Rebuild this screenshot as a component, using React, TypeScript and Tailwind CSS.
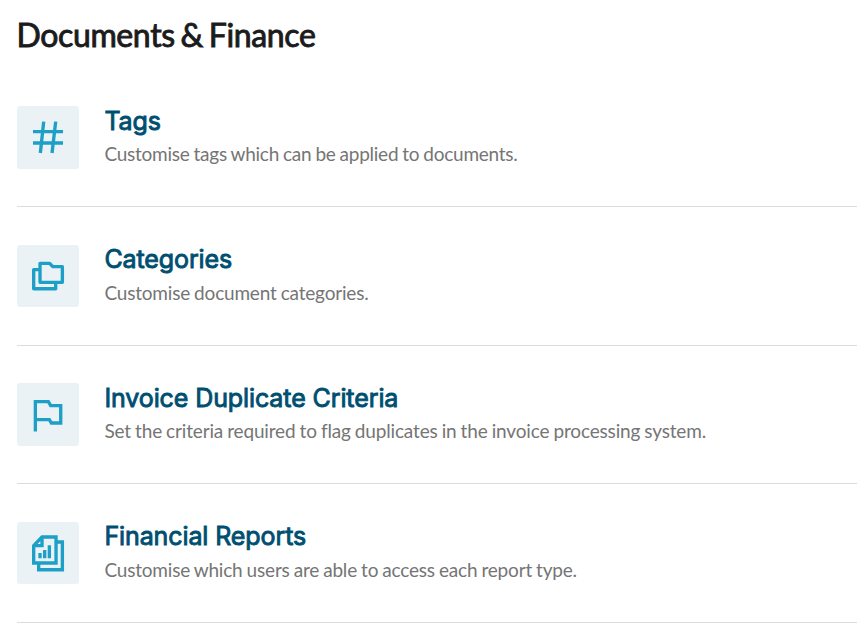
import type { ReactNode } from "react";

type Setting = {
  title: string;
  description: string;
  tracking: string;
  icon: ReactNode;
};

const settings: Setting[] = [
  {
    title: "Tags",
    description: "Customise tags which can be applied to documents.",
    tracking: "tracking-[-0.25px]",
    icon: <path d="M69 97H159M69 131H159M101 67L91 161M137 67L126 161" />,
  },
  {
    title: "Categories",
    description: "Customise document categories.",
    tracking: "tracking-[-0.19px]",
    icon: (
      <path
        d="M90 75H119L128 85H157V132H90ZM90 94H71V151H137V132"
        strokeLinejoin="round"
      />
    ),
  },
  {
    title: "Invoice Duplicate Criteria",
    description:
      "Set the criteria required to flag duplicates in the invoice processing system.",
    tracking: "tracking-[-0.16px]",
    icon: <path d="M76 165V76H115L122 88H152V140H124L118 130H76" />,
  },
  {
    title: "Financial Reports",
    description: "Customise which users are able to access each report type.",
    tracking: "tracking-[-0.19px]",
    icon: (
      <>
        <path d="M96 65H138V143H71V91ZM96 65V91H71M142 80H157V163H86V147" />
        <path d="M90 113V129M104 104V129M118 90V129" />
      </>
    ),
  },
];

function SettingRow({ title, description, tracking, icon }: Setting) {
  return (
    <a
      href="#"
      className="flex h-[138.6px] items-center gap-[25px] border-b border-[#dcdcdc]"
    >
      <span className="h-[62.4px] w-[62.4px] shrink-0 rounded-[3px] bg-[#eaf2f6]">
        <svg
          viewBox="21 20 187 187"
          className="h-full w-full"
          fill="none"
          stroke="#1d9fc6"
          strokeWidth="10"
        >
          {icon}
        </svg>
      </span>
      <div className="pb-[2.1px] whitespace-nowrap">
        <h2 className="font-['Inter'] text-[25px] leading-[32px] font-normal tracking-[-0.1px] text-[#004f71] [-webkit-text-stroke:0.9px_#004f71]">
          {title}
        </h2>
        <p
          className={`mt-[3.7px] font-['Lato'] text-[19px] leading-[28px] text-[#757575] [word-spacing:-0.6px] ${tracking}`}
        >
          {description}
        </p>
      </div>
    </a>
  );
}

export default function App() {
  return (
    <main className="h-[627px] overflow-hidden bg-white pl-[17px] font-['Lato',sans-serif]">
      <h1 className="-ml-[0.5px] h-[68.6px] pt-[15px] text-[32px] leading-[40px] tracking-[-0.37px] text-[#1b1b1b] [-webkit-text-stroke:0.9px_#1b1b1b] [word-spacing:-2px]">
        Documents &amp; Finance
      </h1>
      {settings.map((setting) => (
        <SettingRow key={setting.title} {...setting} />
      ))}
    </main>
  );
}
